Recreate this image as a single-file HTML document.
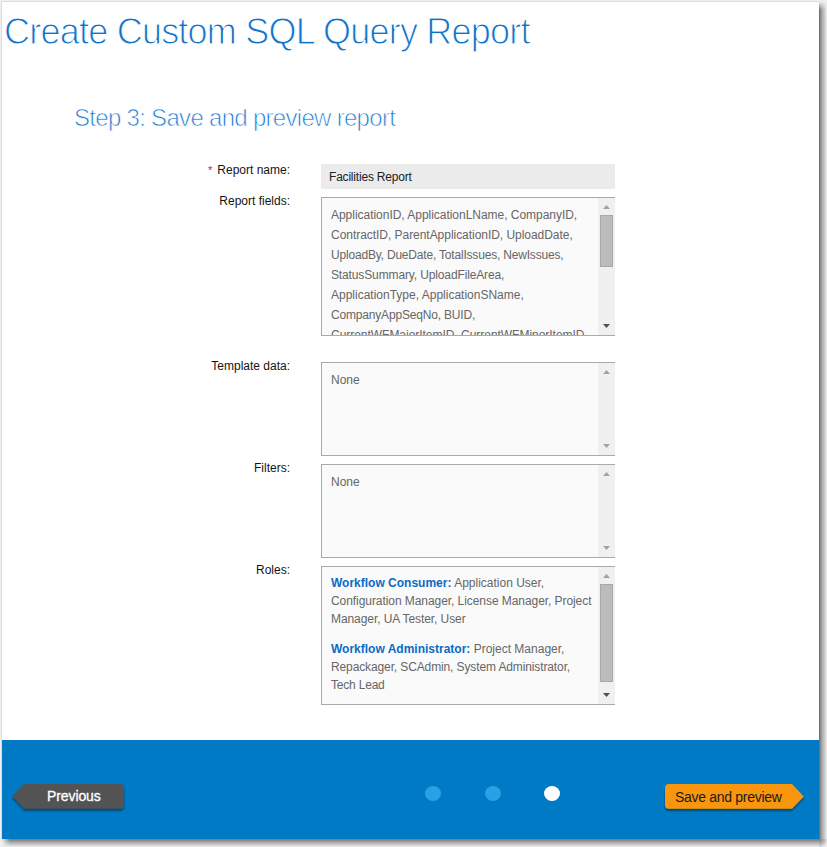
<!DOCTYPE html>
<html><head><meta charset="utf-8">
<style>
html,body{margin:0;padding:0;width:827px;height:847px;overflow:hidden;background:#efefef;}
body{font-family:"Liberation Sans",sans-serif;position:relative;}
.win{position:absolute;left:2px;top:2px;width:817px;height:837px;background:#fff;}
.edgeT{position:absolute;left:2px;top:1px;width:817px;height:1px;background:#dcdcdc;}
.edgeL{position:absolute;left:1px;top:2px;width:1px;height:837px;background:#dcdcdc;}
.shR{position:absolute;left:819px;top:10px;width:8px;height:829px;background:linear-gradient(to right,#707070 0.0% 12.5%,#8c8c8c 12.5% 25.0%,#9e9e9e 25.0% 37.5%,#b0b0b0 37.5% 50.0%,#bdbdbd 50.0% 62.5%,#cacaca 62.5% 75.0%,#d8d8d8 75.0% 87.5%,#e8e8e8 87.5% 100.0%);}
.shRT{position:absolute;left:819px;top:2px;width:8px;height:8px;background:linear-gradient(to right,#707070 0.0% 12.5%,#8c8c8c 12.5% 25.0%,#9e9e9e 25.0% 37.5%,#b0b0b0 37.5% 50.0%,#bdbdbd 50.0% 62.5%,#cacaca 62.5% 75.0%,#d8d8d8 75.0% 87.5%,#e8e8e8 87.5% 100.0%);
  -webkit-mask-image:linear-gradient(to bottom,rgba(0,0,0,0.05),rgba(0,0,0,1));}
.shB{position:absolute;left:10px;top:839px;width:809px;height:8px;background:linear-gradient(to bottom,#808080 0.0% 12.5%,#8c8c8c 12.5% 25.0%,#9d9d9d 25.0% 37.5%,#acacac 37.5% 50.0%,#bcbcbc 50.0% 62.5%,#c8c8c8 62.5% 75.0%,#d8d8d8 75.0% 87.5%,#eaeaea 87.5% 100.0%);}
.shBL{position:absolute;left:2px;top:839px;width:8px;height:8px;background:linear-gradient(to bottom,#808080 0.0% 12.5%,#8c8c8c 12.5% 25.0%,#9d9d9d 25.0% 37.5%,#acacac 37.5% 50.0%,#bcbcbc 50.0% 62.5%,#c8c8c8 62.5% 75.0%,#d8d8d8 75.0% 87.5%,#eaeaea 87.5% 100.0%);
  -webkit-mask-image:linear-gradient(to right,rgba(0,0,0,0.05),rgba(0,0,0,1));}
.shBR{position:absolute;left:819px;top:839px;width:8px;height:8px;background:radial-gradient(circle at 0 0,#7c7c7c 0,#9a9a9a 3px,#c0c0c0 6px,#ececec 9px);}
.abs{position:absolute;white-space:nowrap;}
.title{left:4px;top:7px;font-size:36px;line-height:50px;color:#0f72c9;letter-spacing:-0.77px;-webkit-text-stroke:1px #fff;paint-order:normal;}
.step{left:74px;top:101px;font-size:24px;line-height:34px;color:#1f7bd0;letter-spacing:-0.7px;-webkit-text-stroke:0.7px #fff;}
.lbl{font-size:12px;line-height:16px;margin-top:1px;color:#141414;text-align:right;right:537px;}
.req{color:#b42336;}
.inp{left:321px;top:164px;width:294px;height:25px;background:#ebebeb;}
.inp span{position:absolute;left:8px;top:5px;font-size:12px;line-height:16px;color:#222;letter-spacing:-0.2px;}
.ta{position:absolute;left:321px;width:293px;border:1px solid #aaaaaa;border-right:0;background:#fafafa;overflow:hidden;}
.ta .txt{position:absolute;left:9px;top:7px;font-size:12px;color:#666;line-height:20px;white-space:nowrap;}
.sb{position:absolute;left:276px;top:0;bottom:0;width:17px;background:#f0f0f0;}
.up,.dn{position:absolute;left:5px;width:7px;height:4px;}
.up svg,.dn svg{display:block;}
.thumb{position:absolute;left:2px;width:11px;background:#bcbcbc;border:1px solid #a8a8a8;}
.roles{position:absolute;left:9px;top:7px;font-size:12px;color:#666;line-height:18px;white-space:nowrap;}
.roles b{color:#0c6bc6;}
.roles p{margin:0 0 12px 0;}
.footer{position:absolute;left:2px;top:740px;width:817px;height:99px;background:#007ac4;}
.dot{position:absolute;width:16px;height:15px;border-radius:50%;background:#29a1e6;top:786px;}
.btxt{position:absolute;white-space:nowrap;}
</style></head><body>
<div class="win"></div>
<div class="edgeT"></div><div class="edgeL"></div>
<div class="shR"></div><div class="shRT"></div><div class="shB"></div><div class="shBL"></div><div class="shBR"></div>

<div class="abs title">Create Custom SQL Query Report</div>
<div class="abs step">Step 3: Save and preview report</div>

<div class="abs lbl" style="top:161px;"><span class="req" style="margin-right:5px;font-size:11px">*</span>Report name:</div>
<div class="abs inp"><span>Facilities Report</span></div>

<div class="abs lbl" style="top:192px;">Report fields:</div>
<div class="ta" style="top:197px;height:137px;">
  <div class="txt"><span style="letter-spacing:-0.03px">ApplicationID, ApplicationLName, CompanyID,</span><br><span style="letter-spacing:-0.04px">ContractID, ParentApplicationID, UploadDate,</span><br><span style="letter-spacing:-0.19px">UploadBy, DueDate, TotalIssues, NewIssues,</span><br><span style="letter-spacing:-0.13px">StatusSummary, UploadFileArea,</span><br>ApplicationType, ApplicationSName,<br><span style="letter-spacing:-0.18px">CompanyAppSeqNo, BUID,</span><br><span style="letter-spacing:-0.03px">CurrentWFMajorItemID, CurrentWFMinorItemID,</span></div>
  <div class="sb"><div class="up" style="top:7px;"><svg width="7" height="4"><polygon points="0,4 7,4 3.5,0" fill="#a3a3a3"/></svg></div><div class="thumb" style="top:17px;height:50px;"></div><div class="dn" style="top:126px;"><svg width="7" height="4"><polygon points="0,0 7,0 3.5,4" fill="#505050"/></svg></div></div>
</div>

<div class="abs lbl" style="top:357px;">Template data:</div>
<div class="ta" style="top:362px;height:92px;">
  <div class="txt">None</div>
  <div class="sb"><div class="up" style="top:7px;"><svg width="7" height="4"><polygon points="0,4 7,4 3.5,0" fill="#a3a3a3"/></svg></div><div class="dn" style="top:81px;"><svg width="7" height="4"><polygon points="0,0 7,0 3.5,4" fill="#a3a3a3"/></svg></div></div>
</div>

<div class="abs lbl" style="top:459px;">Filters:</div>
<div class="ta" style="top:464px;height:92px;">
  <div class="txt">None</div>
  <div class="sb"><div class="up" style="top:7px;"><svg width="7" height="4"><polygon points="0,4 7,4 3.5,0" fill="#a3a3a3"/></svg></div><div class="dn" style="top:81px;"><svg width="7" height="4"><polygon points="0,0 7,0 3.5,4" fill="#a3a3a3"/></svg></div></div>
</div>

<div class="abs lbl" style="top:561px;">Roles:</div>
<div class="ta" style="top:566px;height:137px;">
  <div class="roles"><p><b>Workflow Consumer:</b> Application User,<br><span style="letter-spacing:-0.065px">Configuration Manager, License Manager, Project</span><br><span style="letter-spacing:-0.08px">Manager, UA Tester, User</span></p><p><b>Workflow Administrator:</b> Project Manager,<br><span style="letter-spacing:-0.12px">Repackager, SCAdmin, System Administrator,</span><br><span style="letter-spacing:-0.2px">Tech Lead</span></p></div>
  <div class="sb"><div class="up" style="top:7px;"><svg width="7" height="4"><polygon points="0,4 7,4 3.5,0" fill="#a3a3a3"/></svg></div><div class="thumb" style="top:17px;height:96px;"></div><div class="dn" style="top:126px;"><svg width="7" height="4"><polygon points="0,0 7,0 3.5,4" fill="#505050"/></svg></div></div>
</div>

<div class="footer"></div>
<div class="dot" style="left:425px;"></div>
<div class="dot" style="left:485px;"></div>
<div class="dot" style="left:544px;background:#fff;"></div>

<svg class="abs" style="left:0;top:0;" width="827" height="847">
  <defs>
    <filter id="bs" x="-10%" y="-30%" width="120%" height="170%">
      <feGaussianBlur in="SourceAlpha" stdDeviation="1"/>
      <feOffset dy="1.5" result="o"/>
      <feComponentTransfer><feFuncA type="linear" slope="0.45"/></feComponentTransfer>
      <feMerge><feMergeNode/><feMergeNode in="SourceGraphic"/></feMerge>
    </filter>
  </defs>
  <path filter="url(#bs)" fill="#525252" d="M12.3,796.4 L24.3,784 L120,784 Q124,784 124,788 L124,804.7 Q124,808.7 120,808.7 L24.3,808.7 Z"/>
  <path filter="url(#bs)" fill="#f89608" d="M669,784 L792,784 L803.8,796.4 L792,808.7 L669,808.7 Q665,808.7 665,804.7 L665,788 Q665,784 669,784 Z"/>
</svg>
<div class="btxt" style="left:47px;top:788px;font-size:14px;line-height:16px;color:#fff;-webkit-text-stroke:0.3px #fff;letter-spacing:-0.1px;">Previous</div>
<div class="btxt" style="left:675px;top:789px;font-size:14px;line-height:16px;color:#1b1b1b;letter-spacing:-0.3px;">Save and preview</div>
</body></html>
